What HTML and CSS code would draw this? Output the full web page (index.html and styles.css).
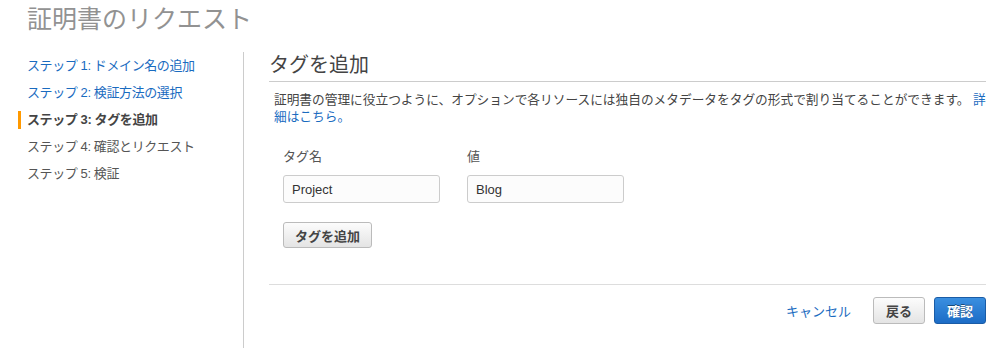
FILE: index.html
```html
<!DOCTYPE html>
<html>
<head>
  <meta charset="utf-8">
  <title>証明書のリクエスト</title>
  <link rel="stylesheet" href="styles.css">
</head>
<body>
<h1 class="page-title">証明書のリクエスト</h1>
<div class="layout">
  <ul class="steps">
    <li><a class="step" href="#">ステップ 1: ドメイン名の追加</a></li>
    <li><a class="step" href="#">ステップ 2: 検証方法の選択</a></li>
    <li><span class="step active">ステップ 3: タグを追加</span></li>
    <li><span class="step">ステップ 4: 確認とリクエスト</span></li>
    <li><span class="step">ステップ 5: 検証</span></li>
  </ul>
  <div class="main">
    <h2 class="section-title">タグを追加</h2>
    <p class="desc">証明書の管理に役立つように、オプションで各リソースには独自のメタデータをタグの形式で割り当てることができます。 <a href="#">詳細はこちら。</a></p>
    <div class="tag-form">
      <div class="tag-row">
        <label for="tagName">タグ名</label>
        <label for="tagValue">値</label>
        <input id="tagName" type="text" value="Project">
        <input id="tagValue" type="text" value="Blog">
      </div>
      <button class="btn add-btn">タグを追加</button>
    </div>
    <div class="footer">
      <a class="cancel" href="#">キャンセル</a>
      <button class="btn">戻る</button>
      <button class="btn primary">確認</button>
    </div>
  </div>
</div>
</body>
</html>
```

FILE: styles.css
```css
body {
  margin: 0;
  background: #fff;
  color: #444;
  font-family: 'Liberation Sans', 'Noto Sans CJK JP', sans-serif;
  font-size: 13px;
}
a {
  color: #1a6bbf;
  text-decoration: none;
}
.page-title {
  margin: 0;
  padding-left: 27px;
  height: 52px;
  line-height: 38px;
  font-size: 25px;
  font-weight: normal;
  color: #929292;
}
.layout {
  display: flex;
  min-height: calc(100vh - 52px);
}
.steps {
  list-style: none;
  margin: 0;
  padding: 0;
  width: 243px;
  flex-shrink: 0;
  border-right: 1px solid #ccc;
}
.steps li {
  padding: 5px 0 4px 18px;
}
.step {
  display: block;
  line-height: 18px;
  padding-left: 6px;
  border-left: 3px solid transparent;
  letter-spacing: -0.4px;
  color: #555;
}
a.step {
  color: #1a6bbf;
}
.step.active {
  border-left-color: #f90;
  font-weight: bold;
  color: #444;
}
.main {
  flex: 1;
  padding: 0 15px 0 25px;
}
.section-title {
  margin: 0;
  line-height: 26px;
  padding-bottom: 3px;
  font-size: 20px;
  font-weight: normal;
  color: #444;
  border-bottom: 1px solid #ccc;
}
.desc {
  margin: 10px 0 0 5px;
  line-height: 17px;
  font-size: 12.7px;
}
.tag-form {
  padding-left: 14px;
  margin-top: 22px;
}
.tag-row {
  display: grid;
  grid-template-columns: 157px 157px;
  column-gap: 27px;
  row-gap: 10px;
}
.tag-row label {
  line-height: 17px;
  color: #555;
}
.tag-row input {
  box-sizing: border-box;
  height: 28px;
  padding: 0 8px;
  border: 1px solid #ccc;
  border-radius: 3px;
  background: #fcfcfc;
  font-family: inherit;
  font-size: 13px;
  color: #333;
}
.btn {
  height: 27px;
  padding: 0 12px;
  border: 1px solid #bbb;
  border-radius: 3px;
  background: linear-gradient(#fcfcfc, #e4e4e4);
  font-family: inherit;
  font-size: 13px;
  font-weight: bold;
  color: #444;
}
.add-btn {
  margin-top: 19px;
  height: 26px;
  padding: 0 11px;
}
.footer {
  display: flex;
  justify-content: flex-end;
  align-items: center;
  gap: 9px;
  margin-top: 36px;
  padding-top: 12px;
  border-top: 1px solid #ddd;
}
.cancel {
  margin-right: 13px;
}
.btn.primary {
  background: linear-gradient(#3a8fe0, #1c6cc6);
  border-color: #1a5ca6;
  color: #fff;
  text-shadow: 0 -1px 0 rgba(0, 0, 0, 0.45);
}
```
